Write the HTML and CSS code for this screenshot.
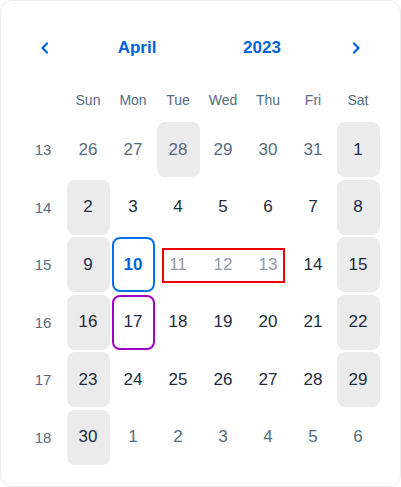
FILE: index.html
```html
<!DOCTYPE html>
<html>
<head>
<meta charset="utf-8">
<link rel="stylesheet" href="styles.css">
</head>
<body>
<div class="card">
  <div class="header">
    <button class="nav prev" aria-label="Previous">
      <svg width="10" height="12" viewBox="0 0 10 12"><path d="M7 1.5 L2.5 6 L7 10.5" fill="none" stroke="#0064d9" stroke-width="2.2" stroke-linecap="round" stroke-linejoin="round"/></svg>
    </button>
    <button class="title month">April</button>
    <button class="title year">2023</button>
    <div class="spacer"></div>
    <button class="nav next" aria-label="Next">
      <svg width="10" height="12" viewBox="0 0 10 12"><path d="M3 1.5 L7.5 6 L3 10.5" fill="none" stroke="#0064d9" stroke-width="2.2" stroke-linecap="round" stroke-linejoin="round"/></svg>
    </button>
  </div>
  <div class="weekdays">
    <span></span><span>Sun</span><span>Mon</span><span>Tue</span><span>Wed</span><span>Thu</span><span>Fri</span><span>Sat</span>
  </div>
  <div class="days">
    <span class="wk">13</span>
    <span class="d other">26</span><span class="d other">27</span><span class="d other gray">28</span><span class="d other">29</span><span class="d other">30</span><span class="d other">31</span><span class="d gray">1</span>

    <span class="wk">14</span>
    <span class="d gray">2</span><span class="d">3</span><span class="d">4</span><span class="d">5</span><span class="d">6</span><span class="d">7</span><span class="d gray">8</span>

    <span class="wk">15</span>
    <span class="d gray">9</span><span class="d today">10</span>
    <span class="range-group">
      <span class="d disabled">11</span><span class="d disabled">12</span><span class="d disabled">13</span>
      <span class="range"></span>
    </span>
    <span class="d">14</span><span class="d gray">15</span>

    <span class="wk">16</span>
    <span class="d gray">16</span><span class="d special">17</span><span class="d">18</span><span class="d">19</span><span class="d">20</span><span class="d">21</span><span class="d gray">22</span>

    <span class="wk">17</span>
    <span class="d gray">23</span><span class="d">24</span><span class="d">25</span><span class="d">26</span><span class="d">27</span><span class="d">28</span><span class="d gray">29</span>

    <span class="wk">18</span>
    <span class="d gray">30</span><span class="d other">1</span><span class="d other">2</span><span class="d other">3</span><span class="d other">4</span><span class="d other">5</span><span class="d other">6</span>
  </div>
</div>
</body>
</html>
```
FILE: styles.css
```css
html, body {
  margin: 0;
  padding: 0;
  background: #ffffff;
}
body {
  font-family: "Liberation Sans", Arial, sans-serif;
  color: #1d2d3e;
}
.card {
  box-sizing: border-box;
  width: 401px;
  border: 1px solid #ececec;
  border-radius: 12px;
  padding: 24px 20.5px 21px 20.5px;
  background: #fff;
}
.header {
  display: flex;
  align-items: center;
  height: 44px;
  padding-top: 1px;
}
.header button {
  border: 0;
  background: transparent;
  padding: 0;
  margin: 0;
  height: 44px;
  font-family: inherit;
  color: #0064d9;
  display: flex;
  align-items: center;
  justify-content: center;
  cursor: pointer;
}
.nav { width: 47px; }
.next { width: 48px; }
.month { width: 137px; }
.year { width: 113px; }
.spacer { flex: 1; }
.title {
  font-size: 17px;
  font-weight: bold;
}
.weekdays {
  display: grid;
  grid-template-columns: repeat(8, 43px);
  column-gap: 2px;
  margin-top: 14px;
  height: 32px;
  align-items: center;
  font-size: 14px;
  color: #556b82;
}
.weekdays span {
  text-align: center;
}
.days {
  display: grid;
  grid-template-columns: repeat(8, 43px);
  grid-auto-rows: 55px;
  column-gap: 2px;
  row-gap: 2.5px;
  margin-top: 6px;
}
.wk {
  display: flex;
  align-items: center;
  justify-content: center;
  font-size: 15px;
  color: #556b82;
}
.d {
  box-sizing: border-box;
  display: flex;
  align-items: center;
  justify-content: center;
  font-size: 17px;
  color: #1d2d3e;
  border-radius: 8px;
}
.d.other { color: #556b82; }
.d.gray { background: #ebebeb; }
.d.disabled { color: #8e9cac; }
.d.today {
  border: 2px solid #0070f2;
  color: #0064d9;
  font-weight: bold;
}
.d.special {
  border: 2px solid #a100c2;
}
.range-group {
  grid-column: span 3;
  display: grid;
  grid-template-columns: repeat(3, 43px);
  column-gap: 2px;
  position: relative;
}
.range {
  position: absolute;
  left: 5.5px;
  right: 4.5px;
  top: 11px;
  height: 35px;
  border: 2px solid #ee0000;
  box-sizing: border-box;
  pointer-events: none;
}
```
